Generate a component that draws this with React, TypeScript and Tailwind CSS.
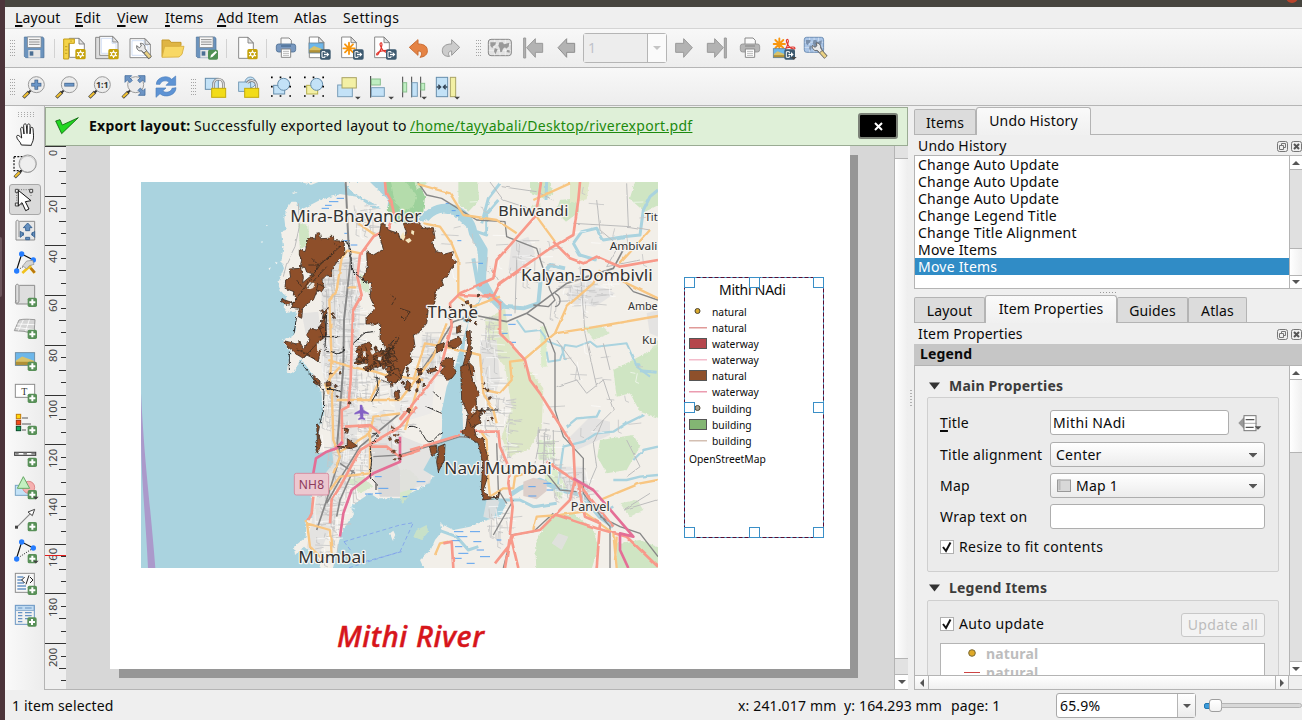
import React from "react";

type Kids = { children?: React.ReactNode };

/* ---------- icon cells ---------- */
function Ic({ x, y, children }: Kids & { x: number; y: number }) {
  return (
    <svg className="h-[30px] w-[33px] shrink-0" viewBox={`${x} ${y} 99 90`} fill="none">
      {children}
    </svg>
  );
}
function Side({ y, active, children }: Kids & { y: number; active?: boolean }) {
  return (
    <div className="h-8 w-8 shrink-0 relative">
      {active && <div className="absolute inset-x-0 top-0.5 h-[31px] rounded-[3px] border border-[#a8a8a8] bg-[#dadada]" />}
      <svg className="relative h-8 w-8" viewBox={`27 ${y} 96 96`} fill="none">
        {children}
      </svg>
    </div>
  );
}
const Sep = () => <div className="mx-[3px] h-[19px] w-px shrink-0 bg-[#d2d2d2]" />;
function Grip({ pad }: { pad: string }) {
  return (
    <svg className={`h-[18px] w-4 shrink-0 ${pad}`} viewBox="0 0 16 18">
      {[0, 1, 2].map((c) =>
        [0, 1, 2, 3, 4, 5].map((r) => <rect key={`${c}${r}`} x={7 + c * 2} y={1 + r * 3} width="1" height="1" fill="#a5a5a5" />)
      )}
    </svg>
  );
}

function Gear({ x, y }: { x: number; y: number }) {
  return (
    <g transform={`translate(${x} ${y})`}>
      <rect width="31" height="31" rx="5" fill="#c5a20b" />
      <circle cx="15.5" cy="15.5" r="6" stroke="#fff" strokeWidth="3.5" />
      <path d="M15.5 4v6M15.5 21v6M5 10l5 3M21 18l5 3M26 10l-5 3M10 18l-5 3" stroke="#fff" strokeWidth="3.5" />
    </g>
  );
}
function Out({ x, y }: { x: number; y: number }) {
  return (
    <g transform={`translate(${x} ${y})`}>
      <rect width="32" height="31" rx="5" fill="#3d5a70" />
      <path d="M15 7H6v17h9v-5M15 7v5M12 15.500h11" stroke="#fff" strokeWidth="3" />
      <path d="M20 8l8 7.500-8 7.500z" fill="#fff" />
    </g>
  );
}
function Plus({ x, y }: { x: number; y: number }) {
  return (
    <g transform={`translate(${x} ${y})`}>
      <rect width="28" height="28" rx="5" fill="#589058" />
      <path d="M14 5v18M5 14h18" stroke="#fff" strokeWidth="6" />
    </g>
  );
}
function Doc({ x, y, w = 46, h = 62 }: { x: number; y: number; w?: number; h?: number }) {
  return (
    <g transform={`translate(${x} ${y})`}>
      <path d={`M1 1H${w - 16}L${w} 18V${h}H1z`} fill="#fff" stroke="#8a8a8a" strokeWidth="3" />
      <path d={`M${w - 16} 1V18H${w}z`} fill="#e4e4e4" stroke="#7a7a7a" strokeWidth="2.500" />
    </g>
  );
}
function Floppy({ x, y }: { x: number; y: number }) {
  return (
    <g transform={`translate(${x} ${y})`}>
      <path d="M1 2H56l4 4V64H5L1 60z" fill="#6b93bd" stroke="#4d7198" strokeWidth="2" />
      <rect x="11" y="2" width="40" height="31" fill="#f7f7f7" stroke="#888" strokeWidth="2" />
      <path d="M15 10h32M15 17h32M15 24h32" stroke="#777" strokeWidth="2.500" />
      <rect x="13" y="41" width="36" height="23" fill="#e6e6e6" />
      <rect x="17" y="45" width="11" height="13" fill="#4b6f94" />
    </g>
  );
}
function Lens({ x, y, c = "" }: { x: number; y: number; c?: string }) {
  return (
    <g transform={`translate(${x} ${y})`}>
      <path d="M3 65L20 48" stroke="#444" strokeWidth="10" />
      <path d="M4 63L18 50" stroke="#f2c230" strokeWidth="6" />
      <path d="M18 50l8-7" stroke="#333" strokeWidth="6" />
      <circle cx="42" cy="26" r="24" fill="#ececec" stroke="#9b9b9b" strokeWidth="3" />
      {c.includes("h") && <path d="M27 26h30" stroke="#3c5d84" strokeWidth="11" />}
      {c.includes("v") && <path d="M42 11v30" stroke="#3c5d84" strokeWidth="11" />}
      {c.includes("h") && <path d="M29 26h26" stroke="#6b97c8" strokeWidth="7" />}
      {c.includes("v") && <path d="M42 13v26" stroke="#6b97c8" strokeWidth="7" />}
    </g>
  );
}
function Printer({ x, y, body, edge }: { x: number; y: number; body: string; edge: string }) {
  return (
    <g transform={`translate(${x} ${y})`}>
      <path d="M15 20V2H39l7 7V20" fill="#fafafa" stroke="#888" strokeWidth="3" />
      <rect x="1" y="20" width="58" height="24" rx="7" fill={body} stroke={edge} strokeWidth="2.500" />
      <path d="M15 26H45" stroke={edge} strokeWidth="4" />
      <path d="M16 35H44V60H16z" fill="#fff" stroke="#888" strokeWidth="3" />
      <path d="M21 42H39M21 48H39M21 54H39" stroke="#aaa" strokeWidth="2.500" />
    </g>
  );
}
function Picture({ x, y, w, h }: { x: number; y: number; w: number; h: number }) {
  return (
    <g transform={`translate(${x} ${y})`}>
      <rect width={w} height={h} fill="#6db7ea" />
      <path d={`M0 ${h * 0.65}L${w * 0.35} ${h * 0.3}L${w} ${h * 0.65}V${h}H0z`} fill="#d8c26a" />
      <path d={`M0 ${h * 0.72}H${w}V${h}H0z`} fill="#b09036" />
      <rect width={w} height={h} stroke="#66859c" strokeWidth="2.500" />
    </g>
  );
}
const Star = ({ x, y }: { x: number; y: number }) => (
  <path transform={`translate(${x} ${y})`} d="M0-17V17M-17 0H17M-12-12L12 12M-12 12L12-12" stroke="#f8960e" strokeWidth="5.500" strokeLinecap="round" />
);
const Acro = ({ x, y }: { x: number; y: number }) => (
  <path transform={`translate(${x} ${y})`} d="M-3-18c-5 2-3 8 1 15 4 8 12 14 19 14 5-1 3-6-3-6-10 0-23 3-29 9-3 5 1 7 4 2 5-7 10-19 11-28 0-4-1-6-3-6z" stroke="#e2342c" strokeWidth="3.500" />
);
const Down = ({ x, y }: { x: number; y: number }) => <path d={`M${x} ${y}h17l-8.500 8.500z`} fill="#444" />;
const Tri = ({ d, c = "#555" }: { d: string; c?: string }) => (
  <svg className="h-2 w-2" viewBox="0 0 8 8"><path d={d} fill={c} /></svg>
);
function Wrench({ x, y }: { x: number; y: number }) {
  return (
    <g transform={`translate(${x} ${y})`}>
      <path d="M20 20L42 44" stroke="#555" strokeWidth="13" />
      <path d="M22 22L41 43" stroke="#ead184" strokeWidth="9" />
      <path d="M1 8l8 6 6-5-3-8c9-1 15 6 14 15l5 7-8 7-8-7C6 26 0 18 1 8z" fill="#e9e9e9" stroke="#555" strokeWidth="2.500" />
    </g>
  );
}
function WorldIcon({ x, y, fill, edge, land }: { x: number; y: number; fill: string; edge: string; land: string }) {
  return (
    <g transform={`translate(${x} ${y})`}>
      <rect x="1" y="1" width="69" height="49" rx="8" fill={fill} stroke={edge} strokeWidth="3" />
      <path d="M2 17h67M2 34h67M20 2v48M36 2v48M52 2v48" stroke="#fff" strokeWidth="2" opacity=".7" />
      <path d="M7 10h17l-2 8-7 4-2 6-6-8zM20 27l9 4-4 9-3 6-4-9zM34 10h10l4 6 16-5-2 12-8 6-3-4-6 4-3 9-5 2-2-12-4-8zM57 33l8 1v7l-9-2z" fill={land} />
    </g>
  );
}
function Nodes({ y }: { y: number }) {
  return (
    <g transform={`translate(0 ${y})`}>
      <path d="M49 58L65 7L100 25" stroke="#111" strokeWidth="3.500" />
      <path d="M49 58L100 25" stroke="#222" strokeWidth="3" strokeDasharray="3 4" />
      <circle cx="65" cy="7" r="8" fill="#267dff" /><circle cx="100" cy="25" r="8" fill="#267dff" /><circle cx="50" cy="58" r="8" fill="#267dff" />
    </g>
  );
}

/* ---------- map ---------- */
function rng(seed: number) {
  let s = seed;
  return () => {
    s = (s * 16807) % 2147483647;
    return s / 2147483647;
  };
}
function streets(seed: number, x: number, y: number, w: number, h: number, n: number, skew = 0) {
  const r = rng(seed * 7919);
  let d = "";
  for (let i = 0; i < n; i++) {
    const yy = y + r() * h;
    const px = x + r() * w + ((yy - y) / h) * skew;
    const l = 14 + r() * 38;
    const t = (r() - 0.5) * 12;
    d += r() > 0.45 ? `M${px.toFixed(0)} ${yy.toFixed(0)}l${l.toFixed(0)} ${t.toFixed(0)}` : `M${px.toFixed(0)} ${yy.toFixed(0)}l${t.toFixed(0)} ${l.toFixed(0)}l10 4`;
  }
  return d;
}
function specks(seed: number, x: number, y: number, w: number, h: number, n: number, m: number) {
  const r = rng(seed * 7919);
  let d = "";
  for (let i = 0; i < n; i++) {
    const a = 3 + r() * m;
    const b = 3 + r() * m;
    d += `M${(x + r() * w).toFixed(0)} ${(y + r() * h).toFixed(0)}l${a.toFixed(0)} ${(-b / 2).toFixed(0)}l${(a / 2).toFixed(0)} ${b.toFixed(0)}l${(-a).toFixed(0)} ${(b / 2).toFixed(0)}z`;
  }
  return d;
}
const BLOCKS: [number, number, number, number, number, number, number][] = [
  [11, 545, 230, 110, 420, 130, 0], [12, 545, 560, 140, 260, 90, 0], [13, 590, 800, 90, 150, 36, -40], [14, 520, 930, 80, 190, 44, 0],
  [15, 650, 560, 140, 200, 40, 0], [16, 850, 440, 100, 160, 36, -60], [17, 1020, 400, 50, 340, 50, 0], [18, 1070, 650, 40, 190, 26, 0],
  [19, 1195, 740, 45, 120, 18, 0], [20, 1110, 180, 120, 120, 22, 0], [21, 1230, 290, 190, 90, 34, 0], [22, 1240, 860, 100, 100, 30, 0],
  [23, 1300, 20, 220, 220, 6, 0], [24, 1240, 470, 260, 130, 6, 0], [25, 1150, 560, 380, 220, 8, 0], [26, 900, 60, 200, 220, 8, 0],
  [28, 1030, 980, 80, 80, 18, 0], [29, 640, 70, 60, 90, 16, 0],
];

const label = "fill-[#333] stroke-[#f7f5f1] [paint-order:stroke] tracking-normal font-['Noto_Sans','Open_Sans',sans-serif]";

function MapView() {
  return (
    <svg className="absolute left-[31px] top-[36px] h-[386px] w-[517px]" viewBox="3 6 1551 1158" fill="none" strokeLinejoin="round">
      <defs>
        <filter id="rough" x="-5%" y="-5%" width="110%" height="110%">
          <feTurbulence type="fractalNoise" baseFrequency="0.12" numOctaves="3" seed="4" />
          <feDisplacementMap in="SourceGraphic" scale="9" xChannelSelector="R" yChannelSelector="G" />
        </filter>
        <filter id="bend" x="-2%" y="-2%" width="104%" height="104%">
          <feTurbulence type="fractalNoise" baseFrequency="0.03" numOctaves="2" seed="9" />
          <feDisplacementMap in="SourceGraphic" scale="7" xChannelSelector="R" yChannelSelector="G" />
        </filter>
      </defs>
      <rect x="3" y="6" width="1551" height="1158" fill="#aad3df" />
      <path d="M3 640C14 860 32 980 46 1164H24C18 1030 4 900 3 780z" fill="#ab99cb" />
      {/* land */}
      <g fill="#f2efe9" filter="url(#rough)">
        <path d="M455 65L440 85L433 115L437 150L423 155L430 205L424 245L432 265L414 310L424 335L440 350L431 385L440 398L467 395L468 450L460 468L430 478L433 492L452 515L440 575L463 578L482 535L515 580L545 640L552 700L540 735L528 820L560 815L580 800L585 860L560 882L520 885L515 960L518 1010L500 1022L497 1072L462 1100L465 1125L492 1100L528 1130L542 1164L578 1170L600 1070L615 1040L642 1000L630 980L690 940L712 955L780 955L850 920L890 882L910 790L905 690L925 630L965 500L985 430L960 420L1010 370L1030 345L1010 200L990 150L940 105L880 95L850 125L790 100L760 90L700 85L650 50L600 42L540 60L478 92L470 65z" />
        <path d="M735 -9H1574V1184H860L840 1140L872 1110L885 1080L905 1055L900 1030L940 1050L990 1040L1040 1020L1080 1010L1100 970L1080 955L1030 950L1022 920L1020 790L970 770L965 620L975 480L985 430L1030 345L1020 200L1000 150L960 95L910 82L855 95L830 120L780 100L765 80L745 40z" />
        <path d="M610 6L640 40L700 70L740 100L745 60L690 6zM480 6l55 0-20 8zM455 38l18-2-12 6zM750 1060l10-8 6 12-8 18z" />
      </g>
      <g fill="#f7f6f3"><path d="M362 186l6-3-1 6zM386 265l7-3-5 9zM378 135l6 1-4 3zM405 245l8 3-4 5z" /></g>
      {/* greens */}
      <g fill="#cfe5c3" filter="url(#rough)">
        <path d="M475 130L505 135L508 190L480 210z" />
        <path d="M735 -9L830 -9L855 50L850 95L820 125L765 130L740 90L750 60L735 30z" fill="#9dd19b" />
        <path d="M750 -9L800 8L830 45L820 80L790 95L765 70z" fill="#b4dcab" />
        <path d="M955 -9H1010L1018 60L985 95L955 70zM820 -9h35l5 20-30 20zM1170 6h60l10 35-30 12-40-15zM1260 60l50-5 8 40-40 30-30-30zM1490 -9h84v75l-60 30-45-40z" />
        <path d="M1035 420l60-35 15 100 40 60 60 80-5 120-40 65-60 20-20-60 30-90-20-120-50-60z" fill="#dde7c6" />
        <path d="M1290 -9h60l-10 67-50 12z" fill="#e0e8c8" />
        <path d="M1420 570L1574 490V720L1500 695L1470 640L1430 650zM1380 780L1480 765L1500 800L1460 870L1400 880L1372 830zM1190 1184L1185 1090L1230 1010L1300 1000L1360 1050L1375 1100L1350 1184zM1430 1090L1500 1080L1574 1110V1184H1430z" />
        <path d="M1330 440l60 0 20 20-50 20zM1495 560l59-80v120zM1170 80l30-10 8 30-30 12zM660 280l25 20 5 40-25-10zM620 900l50-10 30 30-40 20zM1440 970l50-10 20 30-40 20zM830 1050l30-15 5 20-20 25-25-10zM780 870l30 0 30 30-50 70-10-10zM520 990l15-8 5 20-15 4z" opacity=".8" />
        <path d="M1200 440l20 0 0 120-16 0zM1195 780h50v60h-50zM1210 870l40 0 30 50-20 40-40-50z" fill="#dbeccb" />
      </g>
      {/* built-up */}
      <g fill="#e2e1e0" opacity=".85">
        <path d="M545 230L660 230L660 400L650 820L600 980L530 1140L500 1100L540 900L580 850L560 640L545 560zM485 400l50-5 8 70-45 0zM660 720l70-30 60 80 100 40-20 100-130 40-60-90z" />
        <path d="M1115 190l50-20 20 50-40 60-40-10zM1290 770l60-60 60 15 0 40-100 45zM1250 860l80 0 20 80-60 10zM1235 1090l20-30 30 10-20 40zM1520 400l34-10v80l-25-10zM1020 480l50 0 10 120-20 60-40-60zM1285 320l60-20 80 40-60 40-80-10zM1040 960l40 0-20 60-30-10zM845 470l70 0-30 120-40 0z" />
        <path d="M755 630l60-60 70 30-10 100-100 30z" fill="#ebeae8" />
      </g>
      <path d="M690 790l50 0 40 80 0 80-60 0-20-60z" fill="#dad9d8" />
      {/* rivers */}
      <g stroke="#aad3df" fill="none" strokeWidth="9" filter="url(#bend)">
        <path d="M1000 235L1015 320L1050 355L1090 380L1150 385L1195 370L1203 290L1230 255L1275 265" strokeWidth="12" />
        <path d="M855 115C900 60 985 80 1000 160L1030 210L1025 300L1050 345L1090 385" strokeWidth="26" />
        <path d="M1080 10L1045 55L1025 130M1010 155L1040 165L1040 100L1075 60M1220 6L1218 60M1370 240L1320 225L1300 190L1325 155L1370 145L1390 180L1450 170L1500 165L1510 90L1530 50L1554 30" />
        <path d="M1130 420L1155 455L1200 450L1225 485L1265 500L1275 540M1220 515L1225 545L1260 540L1275 495L1310 500L1350 485L1370 500L1460 490L1490 560L1530 590" strokeWidth="6" />
        <path d="M1280 740L1310 715L1370 710L1380 690M1255 910L1270 800L1330 785L1370 760L1420 755L1460 730L1510 705M1420 900L1460 900L1500 890L1554 885M1480 840L1510 810L1554 800M1340 960L1380 1000L1420 980" strokeWidth="7" />
        <path d="M1110 945L1140 925L1200 900L1250 925L1330 950L1380 1010L1420 1040" strokeWidth="14" />
        <path d="M1075 960L1140 960L1180 980L1250 970" strokeWidth="9" />
        <path d="M1490 560l10-8M1500 572l50 5M900 1052L950 1070L985 1110L1015 1100" strokeWidth="9" />
      </g>
      <path d="M1150 905l30-12 40 10 0 30-30 25-40-10z" fill="#dccfca" />
      <path d="M985 425L965 490L945 560L920 620L908 680L905 770L850 870L900 900L1025 940L1022 800L965 760L965 620L965 560L972 500z" fill="#aad3df" />
      {/* minor streets */}
      <g stroke="#c6c6c6" strokeWidth="2.500" fill="none" filter="url(#bend)">
        {BLOCKS.map((b) => <path key={b[0]} d={streets(b[0], b[1], b[2], b[3], b[4], b[5], b[6])} />)}
      </g>
      <g stroke="#fff" strokeWidth="2.500" opacity=".7">
        {BLOCKS.map((b) => <path key={b[0]} d={streets(b[0] + 70, b[1], b[2], b[3], b[4], b[5] / 2, b[6])} />)}
      </g>
      <g stroke="#bcbcbc" strokeWidth="3" fill="none" filter="url(#bend)">
        <path d="M475 70L478 140L465 200L440 250L430 290M1050 6L1090 60L1180 90M1085 20L1190 35M1370 60L1380 150L1440 200M1300 130L1470 140L1530 150M1460 10L1465 140M1320 260L1335 460L1370 620M1250 480L1310 560L1320 600M1130 240L1125 400M1050 260L1075 300M1200 40L1240 60M1390 720L1360 790L1370 860L1340 930M1250 620L1310 600L1340 640L1390 600L1420 690L1360 750M1460 780L1500 860L1460 890M1230 750H1195V800L1185 850M1215 745L1210 860M1240 750V870M1190 790H1245M1190 820H1245M1440 190L1400 260L1500 240M1530 940L1450 990L1550 960M1390 490L1410 570" />
        <path d="M548 250H640M545 300H650M550 350H640M560 420H650M562 470H650M560 620L640 612M580 250L585 400M560 330V480M640 250L632 400" strokeWidth="2.500" />
      </g>
      {/* wetland dashes */}
      <g stroke="#5aa0ee" strokeWidth="3">
        <path d="M545 85h22M555 76h20M567 65h28M590 55h22M613 160h12M610 182h20M632 195h20M917 70h10M935 92h12M948 107h10M952 182h12M1015 250h14M1090 405h26M1105 433h22M1085 460h18M1108 487h20M705 890h20M715 925h30M705 940h20M675 942h24M830 905h26M810 928h20M788 950h14M1165 920h22M1165 948h24M942 1055h28M952 1070h30M990 1055h30M935 1082h24M945 1100h22M1000 1085h24M955 1120h30M1010 1110h22M935 1135h30M980 1150h24M1020 1130h30M1070 1080h14M1210 910h24M1220 930h20M1350 1015h14" />
      </g>
      <path d="M612 1085L780 1035L820 1028L780 1115L625 1164M612 1085L635 1115M785 1115L655 1150" stroke="#7fa0ec" strokeWidth="2.500" strokeDasharray="12 8" />
      {/* rail */}
      <g stroke="#878787" strokeWidth="4" fill="none">
        <path d="M617 6L625 180L632 240L612 420L610 560L592 790L600 820" strokeWidth="6" />
        <path d="M600 830L560 960L530 1050M640 870L600 960L590 1010M600 850L645 880M780 700L720 750L660 800L610 880L560 970M835 585L880 520L940 425L1000 405L1100 425L1160 400L1280 310L1420 265L1460 190" strokeWidth="5" />
        <path d="M833 6L860 45L905 55L1010 120L1095 125L1100 170L1190 205L1230 330L1245 360L1225 380L1180 375M1160 400L1210 430L1245 520V690L1270 770L1330 835V940L1380 1005L1410 1040V1164M1120 960L1060 1065M1220 880L1260 930L1310 935M1245 340c20 10 20 35 0 40M1440 290L1480 335L1554 360M1380 1010L1440 1040L1500 1060L1554 1130M1410 330" />
        <path d="M700 830L780 825L960 770L1010 775M1070 790L1075 930L1100 970M510 1100L540 1150M845 1060" />
        <path d="M1090 1164L1115 1065L1180 1055L1240 1000" />
      </g>
      {/* secondary roads */}
      <g stroke="#f8c682" strokeWidth="7" fill="none" filter="url(#bend)">
        <path d="M662 220L622 212L605 235L590 330L568 360L575 540L565 640L555 610M655 130L705 165M565 540L630 560L705 575L780 600M565 600L600 560M623 322h26M590 660H780M575 620L580 780L600 830L580 880M600 815L690 760L700 710L780 700M690 660L720 600M690 735L690 880L600 890L570 930M500 1020L510 1100L545 1135L575 1125L570 1050L500 1030" />
        <path d="M833 12L930 40L970 105L1070 120L1130 160M850 130L900 140L935 190L955 240L955 350L1000 380L1080 350M1180 60L1290 10M1190 110L1245 185M1380 270L1360 310L1280 380L1245 460L1150 540L1110 545L1115 600L1080 640L1035 630M1245 460L1340 445L1554 408M1440 300L1554 355M1440 250L1530 150M820 600L855 490L940 505L1020 525L1030 640L1060 690L1070 730M780 660L880 530L920 430M795 750L840 600M780 590L850 600" />
        <path d="M1020 750L1040 780L1045 900L1050 950L1090 925L1120 925L1125 890L1190 865M1380 960L1440 935L1500 910L1554 900M1180 1050L1190 1010L1260 1005L1330 995L1420 1060L1430 1164M885 1125L900 1090L925 1085M1430 1070L1425 1140" />
      </g>
      {/* trunk roads */}
      <g stroke="#f8998a" strokeWidth="8" fill="none" filter="url(#bend)">
        <path d="M735 6L738 40L755 70L762 100L745 145L700 170L660 225L652 290L665 345L640 390L635 500L632 600L625 680L605 690L607 790L580 810" />
        <path d="M615 740L690 735L720 760M780 720L900 570L935 440L930 370L960 340L1060 295L1070 240L1115 190L1185 110L1195 60L1203 6M960 345L1060 350L1080 310L1230 205L1300 165L1315 60L1320 6M1240 185L1290 235L1330 250L1370 230L1440 260L1554 240" />
        <path d="M1045 340L1080 370L1080 460L1110 490L1155 540L1170 600L1200 640L1250 720L1300 800L1305 900L1290 960L1250 1000L1200 1050L1120 1065L1105 1100L1065 1150M660 810L780 740L830 680M810 810L880 790L960 765M960 755L1075 755L1080 800L1110 870L1105 910L1118 980L1110 1060L1135 1164M1110 1070L1095 1164M1220 845L1310 905L1420 1040M1250 1005L1370 1045L1460 1070L1554 1160M1310 900L1335 1010L1380 1030L1370 1164M520 950L515 1000L505 1020M660 810L600 920L575 960L570 1030M910 1090L935 1085L940 1164M690 800L740 800L780 830L840 810" />
      </g>
      <g stroke="#e46e96" strokeWidth="8" fill="none">
        <path d="M607 785L590 805L560 815L528 835L520 880V940M780 770V845L700 880L635 930L610 1000L600 1070M1300 895L1360 930L1480 1070L1440 1060L1440 1110L1465 1164" />
      </g>
      <path d="M660 675l6 0 4 15 16 9v4l-16-3-1 12 6 4v3l-10-2-10 2v-3l6-4-1-12-16 3v-4l16-9z" fill="#8461c4" stroke="#8461c4" />
      {/* natural polygons */}
      <g fill="#8e502b" stroke="#3f2d22" strokeWidth="2.500" filter="url(#rough)">
        <path d="M500 180L512 172L525 177L528 160L538 158L542 176L565 175L575 166L585 182L612 184L615 222L600 235L588 250L575 270V290L560 285L545 300L552 322L530 335L520 360L500 372L488 385L485 415L475 410L478 385L455 382L458 368L470 352L460 345L462 335L435 325L437 300L452 292L448 267L483 265L490 290L488 308L520 282L500 276L495 262L480 262L485 240L478 225L478 208L495 215L500 195z" />
        <path d="M425 357l30 10-10 8-20-8zM535 310l18 12-8 12-16-4zM565 382L555 420L560 465L540 485V515L535 545L520 535L500 525L490 535L465 520L455 510L437 495L435 483L470 492L478 483L490 505L510 480L500 465L512 445L530 450L545 430L550 400z" />
        <path d="M725 122L745 150L775 160L782 180L800 160L790 130L835 128L850 145L880 143L885 175L875 190L890 215L915 222L940 215L935 235L950 245L930 270L925 285L905 300L910 315L885 335V370L865 385L860 430L835 460L820 465L825 500L810 520L815 545L795 560L780 600L755 590L745 560L735 500L720 475L722 432H678V415L705 385L690 350L695 310L665 300L682 265L680 215L700 225L730 208L718 165z" />
        <path d="M650 500L690 485L700 520L730 510L750 560L720 555L690 570L680 540L655 540zM750 570l25-5 10 30-20 15-20-20zM762 635l14-5 2 25-12 5z" />
        <path d="M925 485L960 470L965 490L948 505L925 500zM890 495l24-8-4 20-20 12zM905 545l16-14 20 8-2 18 10 20-12 16-14 8-22-26 14-16-14-4zM950 440l12-4-2 20-10 4zM978 455L990 450L995 520L985 545L1000 560L1003 580L985 600L965 600L968 560L984 500z" />
        <path d="M962 560L985 550L998 600L1018 640L1008 660L1012 690L1028 690L1018 720L1002 745L1010 772L1030 775L1042 830L1040 900L1030 930L1045 950L1075 955L1080 932L1068 955L1030 960L1024 925L1028 850L1015 790L965 760L978 740L984 700L965 660z" />
        <path d="M985 720l30-30 12-6-10 24 6 20-28 14zM868 800l22-4 0 20-14 14zM895 800l20-8-2 48-18 36-5-30zM530 730l8 10-4 20 10 30-12 30-4-10 4-30zM520 585l20 18 0 14-16-6zM558 606l15-1 0 12-14 2zM592 800l40 6 20-8-30-22 0 20-20 4zM612 744l14 4-3 12-8-2zM735 590l24-10 20 10-10 18-20 0zM860 570l28-8 2 10-26 8zM800 600l12 10-4 24-12-8zM800 690l8-4 0 14z" />
        <path d={specks(301, 640, 490, 115, 80, 34, 14)} />
        <path d={specks(302, 740, 560, 110, 70, 14, 9)} />
        <path d={specks(303, 740, 735, 40, 110, 12, 6)} strokeWidth="1.500" />
        <path d={specks(304, 535, 360, 60, 100, 7, 4)} />
        <path d={specks(305, 1015, 590, 40, 170, 8, 4)} />
        <path d={specks(306, 555, 575, 70, 100, 6, 3)} />
        <path d={specks(307, 925, 340, 90, 90, 10, 5)} />
      </g>
      <g fill="#f4e6c0"><path d="M780 170l10-14 6 14-6 12zM795 180l14-6 6 8-10 8zM815 150l8 4-2 12-8-6z" /></g>
      <g fill="#e9e6e0" filter="url(#rough)"><path d="M690 512l12-4 4 12-10 4zM668 515l8-2 2 14-8 2zM715 530l10 2-2 10-10-2zM500 320l10-14 14 4-4 14-16 6zM530 490l20-12-2 20-16 22zM1000 575l8 4 0 30-6-4zM995 690l10-14 2 20-10 6z" /></g>
      <g filter="url(#rough)">
        <path d="M515 235l20 20 40-30M535 255l-10 25M505 255l35 0 60-55-20-10M540 255L510 300L480 340L455 375M470 300l15 20M560 260l-60 65M490 535L550 470L535 440M470 510l30 10 40 30M752 345l15 10-12 20M780 385l30 10-15 25-12-12M745 520l35-50M700 590l50 20" stroke="#2e2620" strokeWidth="2.500" opacity=".8" />
        <path d="M605 184L620 185L632 210L635 270L680 310M470 410L462 460M560 400L555 500L560 515L575 515L590 522L610 515V500M640 490L675 458L700 455M448 515V570M482 545L522 600M525 600L552 635L550 690L540 730M700 760L715 765L690 800L695 840L690 890L708 910L708 930M710 590L715 630L695 665M805 740C850 730 850 790 870 785C890 780 890 760 910 758M880 635L905 660M860 680L905 700M1000 690H1075M560 625l40 8M535 470l60 0M745 500l25-30" stroke="#2a2a2a" strokeWidth="3" />
      </g>
      <rect x="463" y="880" width="103" height="65" rx="6" fill="#ecc8d0" stroke="#d98fa2" strokeWidth="3" />
      <g className={label} strokeWidth="7">
        <text x="451" y="126" fontSize="48" textLength="393" lengthAdjust="spacingAndGlyphs">Mira-Bhayander</text>
        <text x="1075" y="107" fontSize="42" textLength="210" lengthAdjust="spacingAndGlyphs">Bhiwandi</text>
        <text x="1143" y="304" fontSize="46" textLength="395" lengthAdjust="spacingAndGlyphs">Kalyan-Dombivli</text>
        <text x="862" y="413" fontSize="46" textLength="152" lengthAdjust="spacingAndGlyphs">Thane</text>
        <text x="475" y="1148" fontSize="48" textLength="202" lengthAdjust="spacingAndGlyphs">Mumbai</text>
        <text x="913" y="882" fontSize="46" textLength="322" lengthAdjust="spacingAndGlyphs">Navi Mumbai</text>
        <text x="1292" y="993" fontSize="36" textLength="117" lengthAdjust="spacingAndGlyphs">Panvel</text>
        <text x="1409" y="209" fontSize="34" textLength="143" lengthAdjust="spacingAndGlyphs">Ambivali</text>
        <text x="1514" y="122" fontSize="34" textLength="39" lengthAdjust="spacingAndGlyphs">Tit</text>
        <text x="1464" y="389" fontSize="34" textLength="89" lengthAdjust="spacingAndGlyphs">Ambe</text>
        <text x="1506" y="493" fontSize="34" textLength="44" lengthAdjust="spacingAndGlyphs">Ku</text>
      </g>
      <text x="476" y="928" fontSize="36" fill="#8c3a5c" textLength="76" className="tracking-normal font-['Noto_Sans',sans-serif]">NH8</text>
    </svg>
  );
}

/* ---------- layout canvas ---------- */
function Ruler() {
  const ticks = Array.from({ length: 44 }, (_, i) => i);
  return (
    <svg className="h-[543px] w-[21px] shrink-0 bg-[#efefef]" viewBox="45 146 21 543">
      {ticks.map((i) => {
        const y = Math.round(146 + i * 12.43);
        const w = i % 4 === 0 ? 21 : i % 2 === 0 ? 7 : 5;
        return y < 689 ? <rect key={i} x={66 - w} y={y} width={w} height="1" fill="#333" /> : null;
      })}
      {Array.from({ length: 11 }, (_, i) => (
        <text key={i} transform={`translate(57 ${[156, 213, 263, 312, 362, 419, 468, 517, 567, 617, 667][i]}) rotate(-90)`} fontSize="10.5" fill="#444" className="tracking-normal font-['Noto_Sans',sans-serif]" textLength={i === 0 ? 6 : i < 5 ? 13 : 19} lengthAdjust="spacingAndGlyphs">
          {i * 20}
        </text>
      ))}
      <rect x="45" y="555" width="21" height="1" fill="#e01b1b" />
    </svg>
  );
}

const LEGEND: [string, string, string][] = [
  ["dot", "#d9a92b", "natural"], ["line", "#e09a98", "natural"], ["box", "#b5464c", "waterway"], ["line", "#f3bccb", "waterway"],
  ["box", "#8e502b", "natural"], ["line", "#eb9cb0", "waterway"], ["dot", "#a8a090", "building"], ["box", "#83b573", "building"], ["line", "#d4bfb2", "building"],
];
const HANDLES: [number, number][] = [[0, 0], [65, 0], [129, 0], [0, 125], [129, 125], [0, 250], [65, 250], [129, 250]];

function Legend() {
  return (
    <div className="absolute left-[574px] top-[131px] h-[261px] w-[140px]">
      <div className="pt-[4px] pl-[35px] text-[14px] leading-[18px] tracking-[-0.250px]">Mithi NAdi</div>
      <div className="flex flex-col pl-[5px] pt-[5px] text-[10.300px] tracking-[0px]">
        {LEGEND.map(([k, c, t], i) => (
          <div key={i} className={`flex h-4 items-center ${i === 6 ? "mt-px" : ""}`}>
            <svg className="h-[14px] w-[18px]" viewBox="0 0 18 14">
              {k === "dot" && <circle cx="8.500" cy="6" r="2.500" fill={c} stroke="#4b4432" />}
              {k === "line" && <rect y="6" width="18" height="1.500" fill={c} />}
              {k === "box" && <rect x=".5" y="1.500" width="17" height="10" fill={c} stroke="#555" />}
            </svg>
            <span className="pl-[5px]">{t}</span>
          </div>
        ))}
        <div className="pt-[3px] leading-[15px]">OpenStreetMap</div>
      </div>
      <svg className="absolute inset-0 h-[261px] w-[140px]" viewBox="0 0 140 261" fill="none">
        <rect x=".5" y=".5" width="139" height="260" stroke="#4db0d8" />
        <rect x=".5" y=".5" width="139" height="260" stroke="#5a0d35" strokeDasharray="4 2" />
        {HANDLES.map(([x, y]) => <rect key={`${x}-${y}`} x={x + 0.5} y={y + 0.5} width="10" height="10" stroke="#3a8fc7" fill="#fff" fillOpacity={x === 65 && y === 0 ? 1 : 0.001} />)}
      </svg>
    </div>
  );
}

/* ---------- form controls ---------- */
function Combo({ children, icon }: Kids & { icon?: boolean }) {
  return (
    <div className="flex h-[25px] w-[215px] items-center rounded-[3px] border border-[#aeaeae] bg-gradient-to-b from-white to-[#ececec] px-[5px]">
      {icon && (
        <svg className="mr-1 h-[14px] w-[16px]" viewBox="0 0 16 14" fill="none">
          <rect x="1.500" y="1" width="13" height="11.500" fill="#d8d8d8" stroke="#999" /><path d="M3.500 0v11" stroke="#bbb" strokeWidth="2" />
        </svg>
      )}
      <span className="grow">{children}</span>
      <span className="mr-0.5"><Tri d="M-.5 2H8.500L4 6.500z" /></span>
    </div>
  );
}
function Check({ children }: Kids) {
  return (
    <div className="flex items-center gap-[5px]">
      <svg className="h-[14px] w-[14px]" viewBox="0 0 14 14" fill="none">
        <rect x=".5" y=".5" width="13" height="13" fill="#fff" stroke="#b0b0b0" /><path d="M3 7l3 4 4.500-8.500" stroke="#111" strokeWidth="2" />
      </svg>
      <span className="tracking-[0.350px]">{children}</span>
    </div>
  );
}
function DockTitle({ children }: Kids) {
  return (
    <div className="flex items-center justify-between pl-1">
      <span>{children}</span>
      <svg className="h-[11px] w-[25px]" viewBox="0 0 25 11" fill="none" stroke="#777">
        <rect x=".5" y=".5" width="10" height="10" rx="2" /><path d="M2.500 4.500h4v4h-4zM4.500 4.500v-2h4v4h-2" />
        <rect x="14.500" y=".5" width="10" height="10" rx="2" /><path d="M17 3l5 5M22 3l-5 5" strokeWidth="2" stroke="#555" />
      </svg>
    </div>
  );
}
function Tab({ active, w, children }: Kids & { active?: boolean; w: string }) {
  return (
    <div className={`flex shrink-0 items-center justify-center border border-b-0 border-[#b4b4b4] ${w} ${active ? "h-[28px] rounded-t-[3px] bg-gradient-to-b from-[#fafafa] to-[#f0f0f0] pb-px" : "h-[25px] rounded-t-[2px] bg-[#dcdcdc] pt-px"}`}>{children}</div>
  );
}
const Group = ({ children }: Kids) => (
  <div className="flex items-center gap-[9px] pl-[14px] font-bold text-[#3c3c3c] h-[20px] tracking-[0.220px]">
    <svg className="h-[8px] w-[11px]" viewBox="0 0 11 8"><path d="M0 .5h11L5.500 7.500z" fill="#333" /></svg>
    {children}
  </div>
);
const U = ({ children }: Kids) => <span className="underline decoration-[1.500px] underline-offset-2">{children}</span>;

const HISTORY = ["Change Auto Update", "Change Auto Update", "Change Auto Update", "Change Legend Title", "Change Title Alignment", "Move Items", "Move Items"];

function RightDock() {
  return (
    <div className="flex w-[388px] shrink-0 flex-col pt-px">
      <div className="flex h-[28px] items-end border-b border-[#b4b4b4]">
        <Tab w="w-[62px]">Items</Tab>
        <Tab w="w-[115px] -mb-px" active>Undo History</Tab>
      </div>
      <div className="h-[20px] pt-[2px]"><DockTitle>Undo History</DockTitle></div>
      <div className="flex h-[134px] border border-r-0 border-[#b4b4b4] bg-white">
        <div className="w-[374px]">
          {HISTORY.map((t, i) => (
            <div key={i} className={`h-[17px] pl-[3px] leading-[17px] tracking-[0.220px] ${i === 6 ? "bg-[#308cc6] text-white" : ""}`}>{t}</div>
          ))}
        </div>
        <div className="flex w-[13px] flex-col items-center border-l border-[#b4b4b4] bg-[#e0e0e0]">
          <div className="flex h-[14px] w-full items-center justify-center border-b border-[#b4b4b4] bg-white"><Tri d="M0 6H8L4 2z" /></div>
          <div className="grow" />
          <div className="h-[27px] w-full border-t border-[#b4b4b4] bg-gradient-to-r from-white to-[#f0f0f0]" />
          <div className="flex h-[13px] w-full items-center justify-center border-t border-[#b4b4b4] bg-white"><Tri d="M0 2H8L4 6z" /></div>
        </div>
      </div>
      <div className="flex h-[6px] items-center justify-center gap-[2px]">
        {[0, 1, 2, 3, 4, 5].map((i) => <div key={i} className="h-px w-px bg-[#999]" />)}
      </div>
      <div className="flex h-[28px] items-end border-b border-[#b4b4b4]">
        <Tab w="w-[71px]">Layout</Tab>
        <Tab w="w-[132px] -mb-px" active>Item Properties</Tab>
        <Tab w="w-[71px]">Guides</Tab>
        <Tab w="w-[59px]">Atlas</Tab>
      </div>
      <div className="h-[21px] pt-[2px]"><DockTitle>Item Properties</DockTitle></div>
      <div className="h-[21px] bg-[#c6c6c6] pl-[6px] font-bold leading-[20px]">Legend</div>
      <div className="flex h-[310px] overflow-hidden border-l border-t border-[#b4b4b4]">
        <div className="flex w-[374px] shrink-0 flex-col pt-[11px]">
          <Group>Main Properties</Group>
          <div className="ml-3 mt-[2px] flex h-[175px] w-[352px] shrink-0 flex-col rounded-[2px] border border-[#cfcfcf] bg-[#ebebeb] pl-3 pt-[12px]">
            <div className="flex h-[32px] items-start">
              <span className="w-[110px] pt-[4px]"><U>T</U>itle</span>
              <span className="h-[25px] w-[179px] rounded-[3px] border border-[#aeaeae] bg-white pl-[2px] leading-[23px] tracking-[0.350px]">Mithi NAdi</span>
              <svg className="ml-[9px] mt-[3px] h-[20px] w-[24px]" viewBox="0 0 72 60" fill="none">
                <path d="M18 12L1 30l17 18z" fill="#999" /><rect x="18" y="8" width="36" height="45" fill="#fff" stroke="#777" strokeWidth="3" />
                <path d="M23 20h26M23 43h24" stroke="#555" strokeWidth="4" /><path d="M18 31h38" stroke="#888" strokeWidth="2" /><path d="M50 40h20l-10 10z" fill="#555" />
              </svg>
            </div>
            {[<Combo key="c">Center</Combo>, <Combo key="m" icon>Map 1</Combo>, <div key="w" className="h-[25px] w-[215px] rounded-[3px] border border-[#aeaeae] bg-white" />].map((el, i) => (
              <div key={i} className="flex h-[31px] items-start leading-[25px] tracking-[0.250px]">
                <span className="w-[110px] whitespace-nowrap">{["Title alignment", "Map", "Wrap text on"][i]}</span>{el}
              </div>
            ))}
            <div className="pt-[3px]"><Check>Resize to fit contents</Check></div>
          </div>
          <div className="pt-[6px]"><Group>Legend Items</Group></div>
          <div className="ml-3 mt-[2px] h-[160px] w-[352px] shrink-0 rounded-[2px] border border-[#cfcfcf] bg-[#ebebeb] px-3 pt-[12px]">
            <div className="flex h-[30px] w-[325px] items-start justify-between">
              <div className="pt-[2px]"><Check>Auto update</Check></div>
              <div className="flex h-[24px] w-[84px] items-center justify-center rounded-[3px] border border-[#c8c8c8] bg-[#f3f3f3] tracking-[0.350px] text-[#bcbcbc]">Update all</div>
            </div>
            <div className="h-[80px] w-[325px] border border-[#b4b4b4] bg-white pl-[23px] font-bold text-[#bdbdbd]">
              <div className="flex h-[19px] items-center"><svg className="mr-[6px] h-4 w-4" viewBox="0 0 16 16"><circle cx="8" cy="7" r="3.300" fill="#dfa928" stroke="#7a6a35" /></svg>natural</div>
              <div className="flex h-[19px] items-center"><svg className="mr-[6px] h-4 w-4" viewBox="0 0 16 16"><rect y="7" width="16" height="1" fill="#c44" /></svg>natural</div>
            </div>
          </div>
        </div>
        <div className="flex w-[13px] flex-col border-l border-[#b4b4b4] bg-[#e0e0e0]">
          <div className="flex h-[14px] items-center justify-center border-b border-[#b4b4b4] bg-white"><Tri d="M0 6H8L4 2z" /></div>
          <div className="h-[73px] border-b border-[#b4b4b4] bg-gradient-to-r from-white to-[#f0f0f0]" />
          <div className="grow" />
          <div className="flex h-[14px] items-center justify-center border-t border-[#b4b4b4] bg-white"><Tri d="M0 2H8L4 6z" /></div>
        </div>
      </div>
      <div className="flex h-[15px] border border-r-0 border-[#b4b4b4] bg-gradient-to-b from-white to-[#f0f0f0]">
        <div className="flex w-[14px] items-center justify-center border-r border-[#b4b4b4]"><Tri d="M6 0V8L2 4z" /></div>
        <div className="grow" />
        <div className="flex w-[14px] items-center justify-center border-x border-[#b4b4b4]"><Tri d="M2 0V8L6 4z" /></div>
        <div className="w-[13px] bg-[#efefef]" />
      </div>
    </div>
  );
}

const bar = "flex items-center border-b bg-gradient-to-b from-[#f8f8f8] to-[#ededed]";

export default function App() {
  return (
    <div className="flex h-[720px] w-[1302px] overflow-hidden bg-[#efefef] font-['Noto_Sans','Open_Sans',sans-serif] text-[14px] leading-[18px] tracking-[0.150px] text-[#0a0a0a]">
      <div className="w-[5px] shrink-0 bg-[#4c343a]"><div className="mt-[237px] h-[60px] w-[2px] rounded-r bg-[#6d565c]" /></div>
      <div className="flex w-[1297px] flex-col">
        <div className="h-[7px] shrink-0 overflow-hidden bg-[#47453f]"><div className="ml-[1281px] -mt-[9px] h-3 w-3 rounded-full bg-[#b8442c]" /></div>
        <div className="flex h-[22px] shrink-0 items-center gap-[14px] border-b border-[#d4d4d4] bg-[#efefef] pl-[10px] whitespace-nowrap">
          <span className="w-[46px]"><U>L</U>ayout</span><span className="w-[28px]"><U>E</U>dit</span><span className="w-[34px]"><U>V</U>iew</span>
          <span className="w-[38px]"><U>I</U>tems</span><span className="w-[63px]"><U>A</U>dd Item</span><span className="w-[35px]">Atlas</span><span className="tracking-[0.400px]">Settings</span>
        </div>
        <div className={`${bar} h-[39px] border-[#b5b5b5]`}>
          <div className="-ml-[2px] w-[15px]"><Grip pad="" /></div>
          <Ic x={54} y={99}><Floppy x={72} y={109} /></Ic>
          <Sep />
          <Ic x={174} y={99}><Doc x={207} y={114} w={46} h={58} /><path d="M191 117h32v13h-17v47h-15z" fill="#f4d348" stroke="#c39d16" strokeWidth="3" /><path d="M195 140h7M195 150h7M195 160h7M213 121v5" stroke="#a88612" strokeWidth="2" /><Gear x={226} y={147} /></Ic>
          <Ic x={273} y={99}><path d="M287 112h42l14 14v50h-56z" fill="#ddd" stroke="#888" strokeWidth="3" /><Doc x={298} y={108} w={56} h={58} /><path d="M304 115h32v15h12v30h-44z" stroke="#bcd0f0" strokeWidth="2" /><Gear x={325} y={147} /></Ic>
          <Ic x={372} y={99}><Doc x={389} y={115} w={62} h={58} /><path d="M396 122h36v14h12v30h-48z" stroke="#bcd0f0" strokeWidth="2" /><Wrench x={409} y={129} /></Ic>
          <Ic x={471} y={99}><path d="M486 170V120l22 0 5 7h30v10" fill="#dfb544" stroke="#c69a2c" strokeWidth="3" /><path d="M486 172l8-33h58l-6 24-9 8z" fill="#f8d865" stroke="#d6ac3c" strokeWidth="2.500" /></Ic>
          <Ic x={570} y={99}><Floppy x={588} y={109} /><rect x="624" y="149" width="30" height="30" rx="5" fill="#4f8f54" /><path d="M631 173l2-8 14-12 4 4-13 13z" fill="#fff" /></Ic>
          <Sep />
          <Ic x={690} y={99}><Doc x={715} y={111} w={45} h={64} /><Gear x={742} y={147} /></Ic>
          <Sep />
          <Ic x={810} y={99}><Printer x={828} y={112} body="#7898c0" edge="#4a6c92" /></Ic>
          <Ic x={909} y={99}><Doc x={927} y={110} w={45} h={63} /><Picture x={927} y={129} w={43} h={30} /><Out x={960} y={148} /></Ic>
          <Ic x={1008} y={99}><Doc x={1024} y={110} w={45} h={63} /><Star x={1047} y={145} /><Out x={1059} y={148} /></Ic>
          <Ic x={1107} y={99}><Doc x={1123} y={110} w={45} h={63} /><Acro x={1146} y={146} /><Out x={1158} y={148} /></Ic>
          <Ic x={1206} y={99}><path d="M1228 142l26-23v13c22 0 28 10 28 20 0 12-8 18-22 20 6-6 8-20-6-19v13z" fill="#e58344" stroke="#c96a2f" strokeWidth="3" /></Ic>
          <Ic x={15} y={99}><path d="M89 142L65 119v13c-22 0-28 10-28 20 0 12 8 18 22 17-6-6-4-17 6-16v13z" fill="#ccc" stroke="#999" strokeWidth="3" /></Ic>
          <Grip pad="ml-px -mr-px" />
          <Ic x={162} y={99}><WorldIcon x={174} y={117} fill="#e2e2e2" edge="#888" land="#999" /></Ic>
          <Ic x={261} y={99}><path d="M281 114h6v60h-6zM290 143l26-27v14h22v27h-22v15z" fill="#b3b3b3" stroke="#999" strokeWidth="3" /></Ic>
          <Ic x={360} y={99}><path d="M384 143l26-27v14h24v27h-24v15z" fill="#b3b3b3" stroke="#8e8e8e" strokeWidth="3" /></Ic>
          <div className="flex h-[30px] w-[84px] shrink-0 rounded-[3px] border border-[#b5b5b5]">
            <span className="w-[63px] bg-[#ededed] pl-[4px] leading-[28px] text-[#bfc3cb]">1</span>
            <span className="flex grow items-center justify-center border-l border-[#b5b5b5] bg-[#fafafa]"><Tri d="M0 2H8L4 6z" c="#c4c4c4" /></span>
          </div>
          <Ic x={711} y={99}><path d="M787 143l-26-27v14h-24v27h24v15z" fill="#b3b3b3" stroke="#999" strokeWidth="3" /></Ic>
          <Ic x={810} y={99}><path d="M883 114h6v60h-6zM880 143l-26-27v14h-22v27h22v15z" fill="#b3b3b3" stroke="#999" strokeWidth="3" /></Ic>
          <Ic x={909} y={99}><Printer x={930} y={112} body="#b5b5b5" edge="#909090" /></Ic>
          <Ic x={1008} y={99}><Star x={1048} y={132} /><Acro x={1075} y={136} /><Picture x={1030} y={146} w={36} h={27} /><Out x={1063} y={148} /><Down x={1083} y={171} /></Ic>
          <Ic x={1107} y={99}><g transform="translate(1122 111) scale(.84 .92)"><WorldIcon x={0} y={0} fill="#a9c4e6" edge="#6486ae" land="#7b90ab" /></g><Wrench x={1146} y={128} /></Ic>
        </div>
        <div className={`${bar} h-[38px] border-[#b5b5b5]`}>
          <div className="-ml-[2px] w-[15px]"><Grip pad="" /></div>
          <Ic x={54} y={216}><Lens x={67} y={228} c="hv" /></Ic>
          <Ic x={153} y={216}><Lens x={166} y={228} c="h" /></Ic>
          <Ic x={252} y={216}><Lens x={265} y={228} /><text x="288" y="263" fontSize="26" fontWeight="700" fill="#333" textLength="38" lengthAdjust="spacingAndGlyphs" className="tracking-normal">1:1</text></Ic>
          <Ic x={351} y={216}><Lens x={365} y={228} /><path d="M375 227h20l-6 6 8 8-7 7-8-8-7 7zM435 227h-20l6 6-8 8 7 7 8-8 7 7zM435 286v-20l-6 6-8-8-7 7 8 8-7 7z" fill="#6c94c4" stroke="#466f9f" strokeWidth="2.500" /></Ic>
          <Ic x={450} y={216}><path d="M469 253c0-22 34-30 46-15l12-10v28h-29l9-9c-9-8-24-5-27 6zM528 263c0 24-34 32-48 18l-12 11v-28h30l-10 9c12 8 26 2 28-8z" fill="#5d93d4" stroke="#4c7fbd" strokeWidth="2" /></Ic>
          <Grip pad="ml-px -mr-px" />
          <Ic x={597} y={216}><rect x="616" y="235" width="39" height="33" fill="#c3e2f7" stroke="#668eac" strokeWidth="3" /><path d="M641 265V252c0-19 29-19 29 0v13" stroke="#777" strokeWidth="8" /><path d="M641 265V252c0-19 29-19 29 0v13" stroke="#ddd" strokeWidth="4" /><rect x="635" y="265" width="42" height="27" fill="#f2dc18" stroke="#c3aa0c" strokeWidth="3" /></Ic>
          <Ic x={696} y={216}><circle cx="751" cy="247" r="16" fill="#c3e2f7" stroke="#668eac" strokeWidth="2.500" /><rect x="716" y="246" width="36" height="28" fill="#c3e2f7" stroke="#668eac" strokeWidth="2.500" /><path d="M742 249c6-12 26-8 27 5v12" stroke="#777" strokeWidth="8" /><path d="M742 249c6-12 26-8 27 5v12" stroke="#ddd" strokeWidth="4" /><rect x="734" y="265" width="42" height="27" fill="#f2dc18" stroke="#c3aa0c" strokeWidth="3" /></Ic>
          {[795, 894].map((x, i) => (
            <Ic key={x} x={x} y={216}>
              <rect x={x + 26} y="256" width="33" height="26" fill={i ? "#f3f0a5" : "#c3e2f7"} stroke={i ? "#b5ae4c" : "#668eac"} strokeWidth="3" /><circle cx={x + 56} cy="253" r="18" fill="#c3e2f7" stroke="#668eac" strokeWidth="3" />
              <path d={`M${x + 18} 232h5M${x + 44} 232h5M${x + 73} 232h5M${x + 18} 260h5M${x + 73} 260h5M${x + 18} 288h5M${x + 44} 288h5M${x + 73} 288h5`} stroke="#000" strokeWidth="5" />
            </Ic>
          ))}
          <Ic x={993} y={216}><rect x="1013" y="255" width="44" height="35" fill="#c3e2f7" stroke="#7b9fb9" strokeWidth="3" /><rect x="1026" y="233" width="43" height="31" fill="#f3f0a5" stroke="#aaa464" strokeWidth="3" /><Down x={1065} y={290} /></Ic>
          <Ic x={1092} y={216}><path d="M1112 228v65" stroke="#333" strokeWidth="3" /><rect x="1114" y="237" width="27" height="18" fill="#bfeec2" stroke="#8abf8e" strokeWidth="3" /><rect x="1114" y="263" width="39" height="26" fill="#c3e2f7" stroke="#7b9fb9" strokeWidth="3" /><Down x={1165} y={290} /></Ic>
          <Ic x={1191} y={216}><path d="M1208 230v62M1235 230v62M1262 230v62" stroke="#444" strokeWidth="3" /><rect x="1209" y="248" width="11" height="28" fill="#bfeec2" stroke="#8abf8e" strokeWidth="3" /><rect x="1236" y="248" width="16" height="41" fill="#c3e2f7" stroke="#7b9fb9" strokeWidth="3" /><rect x="1263" y="250" width="11" height="20" fill="#bfeec2" stroke="#8abf8e" strokeWidth="3" /><Down x={1264} y={290} /></Ic>
          <Ic x={0} y={216}><rect x="19" y="232" width="34" height="58" fill="#c3e2f7" stroke="#668eac" strokeWidth="3" /><path d="M20 261h12M52 261H40M25 254l7 7-7 7M47 254l-7 7 7 7" stroke="#345" strokeWidth="4" /><rect x="61" y="232" width="16" height="58" fill="#f3f0a5" stroke="#aaa464" strokeWidth="3" /><Down x={73} y={290} /></Ic>
        </div>

        <div className="flex h-[584px] shrink-0">
          {/* tool strip */}
          <div className="flex w-[40px] shrink-0 flex-col border-r border-[#b4b4b4] bg-gradient-to-r from-[#fafafa] to-[#ececec] pl-1">
            <svg className="ml-[9px] mt-[6px] h-[6px] w-[17px] shrink-0" viewBox="0 0 17 6">
              {[0, 1, 2, 3, 4, 5].map((c) => [0, 2, 4].map((r) => <rect key={`${c}${r}`} x={c * 3} y={r} width="1" height="1" fill="#aaa" />))}
            </svg>
            <Side y={54}><path d="M64 135c-2-10-14-16-14-25 0-6 7-5 12 2l3 2-3-27c0-7 7-7 8 0l2 15-1-26c1-6 8-6 8 0l2 25 1-25c1-6 8-5 8 0l0 26 2-17c1-5 7-4 7 1 1 15 3 25 0 36-2 7-5 9-5 14z" fill="#fff" stroke="#222" strokeWidth="3" /></Side>
            <Side y={150}><path d="M42 170h50M42 170v42h22" stroke="#111" strokeWidth="3.500" strokeDasharray="6 4" /><Lens x={41} y={167} /><circle cx="83" cy="191" r="26" fill="#f0f0f0" fillOpacity=".6" stroke="#999" strokeWidth="3" /></Side>
            <Side y={246} active><path d="M56 269h34M50 278v28M93 278v14M56 314h10" stroke="#777" strokeWidth="3" strokeDasharray="3 4" /><path d="M46 268h9v9h-9zM89 268h9v9h-9zM46 309h9v9h-9z" fill="#eee" stroke="#444" strokeWidth="3" /><path d="M55 271v47l11-10 11 24 10-5-11-22 17-3z" fill="#fff" stroke="#111" strokeWidth="3" /></Side>
            <Side y={342}><path d="M58 364h46v56H48V366c0-7 8-7 9 0v45" fill="#e8e8e8" stroke="#8d8d8d" strokeWidth="3" /><path d="M83 369l13 14h-7v9h-12v-9h-7zM61 394l11 8-11 10zM104 394l-10 8 10 10zM77 419v-7h12v7zM69 396v12M97 396v12" fill="#6590bf" stroke="#3e6896" strokeWidth="3" /></Side>
            <Side y={438}><Nodes y={455} /><path d="M67 519l26-24M88 500l16 19" stroke="#f1c21d" strokeWidth="8" /><path d="M92 504l12 14" stroke="#b9770e" strokeWidth="8" /><path d="M68 498l12-15 18-2 4 12-14 4-8 9z" fill="#d5d5d5" stroke="#888" strokeWidth="2" /></Side>
            <Side y={534}><path d="M58 556h46v56H50c-6-1-4-10 0-10M47 606V558c0-7 9-7 10 0v45c0 7-9 9-10 3z" fill="#dedede" stroke="#8d8d8d" strokeWidth="3" /><Plus x={83} y={593} /></Side>
            <Side y={630}><path d="M57 660c15-4 32-2 48-1l-3 43-30-8-29-2z" fill="#d5d5d5" stroke="#999" strokeWidth="3" /><path d="M70 660l-15 32M88 659l-11 34M52 672l51 2M47 682l55 7" stroke="#fff" strokeWidth="2.500" /><Plus x={83} y={689} /></Side>
            <Side y={726}><Picture x={46} y={758} w={58} h={38} /><Plus x={83} y={785} /></Side>
            <Side y={822}><rect x="46" y="853" width="58" height="39" fill="#fff" stroke="#8d8d8d" strokeWidth="3" /><text x="64" y="884" fontSize="30" fill="#333" className="font-['Liberation_Serif',serif]">T</text><Plus x={83} y={881} /></Side>
            <Side y={18}><rect x="49" y="43" width="13" height="13" fill="#ffd60a" stroke="#c47d0a" strokeWidth="3" /><rect x="49" y="61" width="13" height="13" fill="#f24b1a" stroke="#9c3512" strokeWidth="3" /><rect x="49" y="79" width="13" height="13" fill="#13a65a" stroke="#064a28" strokeWidth="3" /><path d="M66 54h18M66 72h27M66 90h12" stroke="#8c8c8c" strokeWidth="5" /><Plus x={83} y={77} /></Side>
            <Side y={114}><rect x="44" y="157" width="63" height="9" fill="#fff" stroke="#444" strokeWidth="3.500" /><path d="M46 161h10M70 161h11M94 161h11" stroke="#888" strokeWidth="6" /><Plus x={83} y={173} /></Side>
            <Side y={210}><rect x="46" y="256" width="40" height="30" fill="#c3e2f7" stroke="#7aa5c5" strokeWidth="3" /><circle cx="86" cy="262" r="18" fill="#f6b0b0" stroke="#dc8989" strokeWidth="3" /><path d="M70 230l19 35H52z" fill="#c3f0c0" stroke="#67a866" strokeWidth="3" /><Plus x={83} y={270} /><Down x={99} y={290} /></Side>
            <Side y={306}><path d="M50 382l44-44" stroke="#888" strokeWidth="3.500" /><path d="M104 328l-7 19-13-11z" fill="#fff" stroke="#444" strokeWidth="3" /><rect x="45" y="377" width="9" height="9" fill="#444" /><Plus x={83} y={366} /></Side>
            <Side y={402}><Nodes y={419} /><Plus x={83} y={462} /><Down x={99} y={482} /></Side>
            <Side y={498}><rect x="46" y="520" width="57" height="57" fill="#f8f8f8" stroke="#8d8d8d" strokeWidth="3" /><path d="M52 531h18M52 540h14M52 549h20M52 558h26M52 567h26" stroke="#6793c4" strokeWidth="5" /><path d="M74 531l-9 9 9 9M90 531l9 9-9 9M87 526l-9 27" stroke="#222" strokeWidth="3" /><Plus x={83} y={557} /></Side>
            <Side y={594}><rect x="46" y="616" width="57" height="57" fill="#f1f1f1" stroke="#6b97c4" strokeWidth="3" /><rect x="47" y="617" width="55" height="14" fill="#c0daf0" stroke="#6b97c4" strokeWidth="2" /><path d="M54 624h13M75 624h20M54 638h13M75 638h20M54 647h13M75 647h20M54 656h13M75 656h20M54 665h13" stroke="#6793c4" strokeWidth="3.500" /><Plus x={82} y={652} /></Side>
          </div>

          {/* centre */}
          <div className="flex w-[863px] shrink-0 flex-col pt-px">
            <div className="flex h-[39px] shrink-0 items-center border border-[#9aab93] bg-[#dff0d8] pl-[9px] pr-[9px] pb-px">
              <svg className="h-[18px] w-[24px] shrink-0" viewBox="0 0 72 54"><path d="M2 12l13-4 7 16L70 2L20 50z" fill="#22d822" stroke="#0c650c" strokeWidth="2.500" /></svg>
              <span className="ml-[10px] w-[102px] whitespace-nowrap font-bold tracking-[0.250px]">Export layout:</span>
              <span className="ml-[3px] w-[216px] whitespace-nowrap tracking-[0.300px]">Successfully exported layout to</span>
              <span className="text-[#1d8a0e] underline tracking-[0.300px]">/home/tayyabali/Desktop/riverexport.pdf</span>
              <div className="ml-auto flex h-[26px] w-[40px] items-center justify-center rounded-[3px] border-2 border-[#7c8278] bg-black">
                <svg className="h-[9px] w-[9px]" viewBox="0 0 9 9"><path d="M1 1l7 7M8 1L1 8" stroke="#fff" strokeWidth="2" /></svg>
              </div>
            </div>
            <div className="flex h-[544px] border-b border-[#b4b4b4]">
              <Ruler />
              <div className="relative h-[543px] w-[828px] overflow-hidden bg-[#d7d7d7]">
                <div className="absolute left-[53px] top-[9px] h-[523px] w-[739px] bg-[#969696]" />
                <div className="absolute left-[44px] top-0 h-[523px] w-[740px] bg-white">
                  <MapView />
                  <Legend />
                  <div className="absolute left-[227px] top-[471px] whitespace-nowrap text-[29px] font-medium italic leading-[38px] tracking-[0.620px] text-[#d7151b] [-webkit-text-stroke:0.500px_#d7151b]">Mithi River</div>
                </div>
              </div>
              <div className="flex w-[14px] flex-col border-l border-[#b4b4b4] bg-gradient-to-r from-white to-[#eee]">
                <div className="h-[13px] border-b border-[#b4b4b4] bg-[#e2e2e2]" />
                <div className="grow" />
                <div className="h-[17px] border-y border-[#b4b4b4] bg-[#e2e2e2]" />
                <div className="flex h-[14px] items-center justify-center bg-white"><Tri d="M0 2H8L4 6z" /></div>
              </div>
            </div>
          </div>
          <div className="flex w-[6px] shrink-0 flex-col items-center justify-center gap-[2px]">
            {[0, 1, 2, 3, 4, 5].map((i) => <div key={i} className="h-px w-[2px] bg-[#b0b0b0]" />)}
          </div>
          <RightDock />
        </div>

        <div className="flex grow items-center pl-[7px] pt-px">
          <span className="w-[726px]">1 item selected</span>
          <span className="w-[106px] whitespace-nowrap">x: 241.017 mm</span>
          <span className="w-[107px] whitespace-nowrap">y: 164.293 mm</span>
          <span className="w-[105px]">page: 1</span>
          <div className="flex h-[25px] w-[140px] rounded-[3px] border border-[#a9a9a9] bg-white">
            <span className="w-[120px] pl-[3px] leading-[23px]">65.9%</span>
            <span className="flex grow items-center justify-center border-l border-[#b5b5b5] bg-gradient-to-b from-white to-[#ececec]"><Tri d="M0 2H8L4 6z" /></span>
          </div>
          <div className="ml-2 flex grow items-center">
            <div className="h-[6px] w-[6px] rounded-l-[2px] border border-[#2377ae] bg-[#3b9ada]" />
            <div className="-mx-px h-[13px] w-[13px] rounded-[3px] border border-[#9e9e9e] bg-gradient-to-b from-white to-[#f2f2f2]" />
            <div className="h-[5px] grow rounded-r border border-[#b5b5b5] bg-[#d8d8d8]" />
          </div>
        </div>
      </div>
    </div>
  );
}
